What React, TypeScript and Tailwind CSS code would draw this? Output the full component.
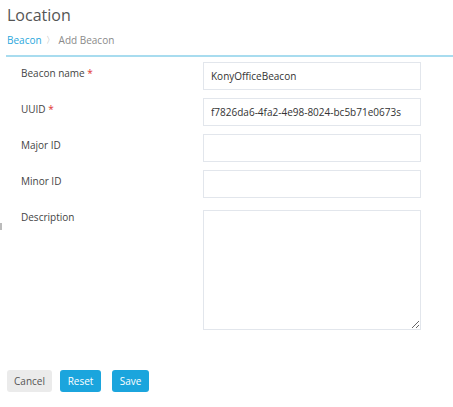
import React from 'react';

const font = { fontFamily: '"Open Sans", "Liberation Sans", sans-serif' };

const Field = ({ label, required, top = 'pt-[4px]', children }: { label: string; required?: boolean; top?: string; children: React.ReactNode }) => (
  <div className="flex items-start">
    <label className={`w-[203px] shrink-0 pl-[21px] ${top} text-[10px] leading-[14px] text-[#444]`}>
      {label}
      {required ? <span className="text-[#e0312f]"> *</span> : null}
    </label>
    {children}
  </div>
);

const inputCls =
  'w-[218px] h-[28px] border border-[#e2e6ec] bg-white px-[7px] text-[10px] text-[#333] outline-none';

export default function App() {
  return (
    <div className="relative w-[453px] h-[407px] bg-white overflow-hidden" style={font}>
      <div className="pl-[7px] pt-[3px]">
        <h1 className="text-[16px] leading-[24px] font-normal text-[#555]">Location</h1>
        <div className="mt-[6px] flex items-center text-[10px] leading-[14px]">
          <span className="text-[#2aa7dc]">Beacon</span>
          <span className="mx-[4px] text-[#aaa] text-[9px]">〉</span>
          <span className="text-[#8a8a8a]">Add Beacon</span>
        </div>
      </div>
      <div className="ml-[6px] mt-[8px] h-[2px] bg-[#a8dcef]" />

      <div className="mt-[5px] flex flex-col gap-[8px]">
        <Field label="Beacon name" required>
          <input className={inputCls} defaultValue="KonyOfficeBeacon" />
        </Field>
        <Field label="UUID" required>
          <input className={inputCls} defaultValue="f7826da6-4fa2-4e98-8024-bc5b71e0673s" />
        </Field>
        <Field label="Major ID">
          <input className={inputCls} />
        </Field>
        <Field label="Minor ID">
          <input className={inputCls} />
        </Field>
        <div className="mt-[4px]">
          <Field label="Description" top="pt-0">
            <textarea className="w-[218px] h-[120px] border border-[#e2e6ec] bg-white text-[10px] outline-none" />
          </Field>
        </div>
      </div>

      <span className="absolute left-0 top-[223px] w-[2px] h-[7px] bg-[#bbb]" />

      <div className="mt-[40px] pl-[7px] flex items-center">
        <button className="h-[22px] w-[45px] rounded-[3px] bg-[#ebebeb] text-[10px] text-[#555]">Cancel</button>
        <button className="ml-[8px] h-[22px] w-[41px] rounded-[3px] bg-[#1ba5dd] text-[10px] text-white">Reset</button>
        <button className="ml-[11px] h-[22px] w-[37px] rounded-[3px] bg-[#1ba5dd] text-[10px] text-white">Save</button>
      </div>
    </div>
  );
}
